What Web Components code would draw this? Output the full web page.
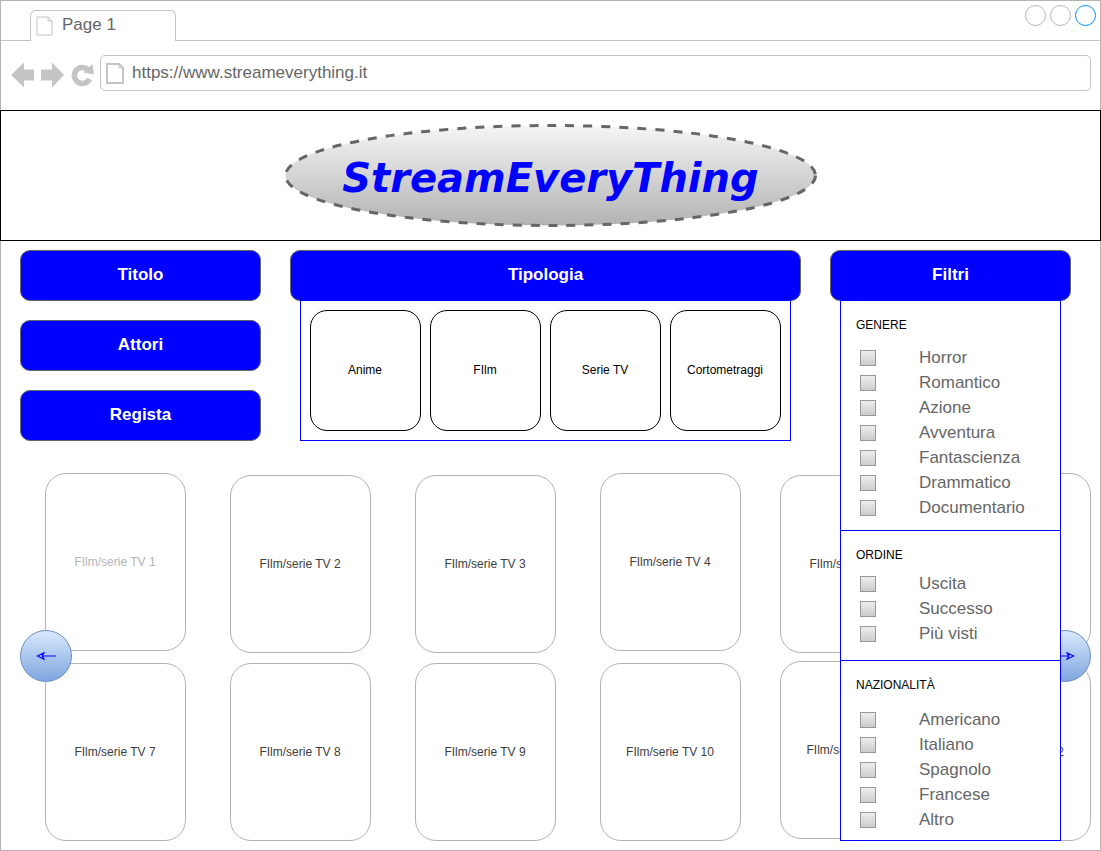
<!DOCTYPE html>
<html lang="it">
<head>
<meta charset="utf-8">
<meta name="viewport" content="width=device-width, initial-scale=1">
<title>StreamEveryThing</title>
<style>
  body { margin: 0; background: #fff; font-family: "Liberation Sans", Arial, sans-serif; }
</style>
</head>
<body>
<browser-frame tab="Page 1" address="https://www.streameverything.it">
  <site-banner>StreamEveryThing</site-banner>
  <search-bar>
    <div slot="search">
      <nav-button>Titolo</nav-button>
      <nav-button>Attori</nav-button>
      <nav-button>Regista</nav-button>
    </div>
    <drop-panel label="Tipologia" slot="types">
      <type-list>
        <type-tile>Anime</type-tile>
        <type-tile>FIlm</type-tile>
        <type-tile>Serie TV</type-tile>
        <type-tile>Cortometraggi</type-tile>
      </type-list>
    </drop-panel>
    <drop-panel label="Filtri" slot="filters" floating>
      <filter-group label="GENERE" options="Horror,Romantico,Azione,Avventura,Fantascienza,Drammatico,Documentario"></filter-group>
      <filter-group label="ORDINE" options="Uscita,Successo,Più visti" spacing="tight"></filter-group>
      <filter-group label="NAZIONALITÀ" options="Americano,Italiano,Spagnolo,Francese,Altro" spacing="wide"></filter-group>
    </drop-panel>
  </search-bar>
  <title-carousel>
    <title-card raised muted>FIlm/serie TV 1</title-card>
    <title-card>FIlm/serie TV 2</title-card>
    <title-card>FIlm/serie TV 3</title-card>
    <title-card raised>FIlm/serie TV 4</title-card>
    <title-card>FIlm/serie TV 5</title-card>
    <title-card raised>FIlm/serie TV 6</title-card>
    <title-card>FIlm/serie TV 7</title-card>
    <title-card>FIlm/serie TV 8</title-card>
    <title-card>FIlm/serie TV 9</title-card>
    <title-card>FIlm/serie TV 10</title-card>
    <title-card raised>FIlm/serie TV 11</title-card>
    <title-card>FIlm/serie TV 12</title-card>
  </title-carousel>
</browser-frame>

<script>
const base = '*, *::before { box-sizing: border-box; } button, input { font-family: inherit; margin: 0; }';

class Base extends HTMLElement {
  connectedCallback() {
    if (this.shadowRoot) return;
    const template = document.createElement('template');
    template.innerHTML = `<style>${base}${this.styles()}</style>${this.markup()}`;
    this.attachShadow({ mode: 'open' }).append(template.content.cloneNode(true));
  }
}

const page = (w, h, stroke) => `
  <svg width="${w}" height="${h}" viewBox="0 0 ${w} ${h}" fill="none" stroke="#c4c4c4" stroke-width="${stroke}" aria-hidden="true">
    <path d="M1 1H${w - 5}L${w - 1} 5V${h - 1}H1Z"/>
    <path d="M${w - 5} 1V5H${w - 1}" stroke-width="1"/>
  </svg>`;

customElements.define('browser-frame', class extends Base {
  styles() { return `
    :host { display: block; min-height: 100vh; box-sizing: border-box; border: 1px solid #b3b3b3; padding-bottom: 9px; }
    .strip { display: flex; justify-content: space-between; height: 40px; padding: 4px 4px 0 29px; border-bottom: 1px solid #c4c4c4; }
    .tab { display: flex; align-items: center; gap: 9px; align-self: flex-end; width: 146px; height: 31px; margin-bottom: -1px; padding: 0 0 0 5px;
      border: 1px solid #c4c4c4; border-bottom: 0; border-radius: 6px 6px 0 0; background: #fff; color: #666; font-size: 17px; line-height: 20px; }
    .tab span { padding-bottom: 3px; }
    .controls { display: flex; gap: 4px; }
    .controls button { width: 21px; height: 21px; padding: 0; border: 1px solid #b3b3b3; border-radius: 50%; background: #fff; }
    .controls button:last-child { border-color: #008cff; }
    .bar { display: flex; align-items: center; gap: 6px; height: 69px; padding: 0 9px 5px 10px; }
    .bar > button { display: block; flex: none; padding: 3px 0 0; border: 0; background: none; }
    svg { display: block; flex: none; }
    label { flex: 1; display: flex; align-items: center; gap: 8px; height: 36px; padding-left: 5px; border: 1px solid #c4c4c4; border-radius: 5px; }
    input { flex: 1; min-width: 0; padding: 0 0 1px; border: 0; outline: 0; background: none; color: #666; font-size: 17px; line-height: 20px; }
  `; }
  markup() { return `
    <div class="strip">
      <button class="tab" type="button">${page(17, 20, 1)}<span>${this.getAttribute('tab')}</span></button>
      <div class="controls">
        <button type="button" aria-label="Riduci"></button>
        <button type="button" aria-label="Ingrandisci"></button>
        <button type="button" aria-label="Chiudi"></button>
      </div>
    </div>
    <div class="bar">
      <button type="button" aria-label="Indietro"><svg width="24" height="26" viewBox="0 0 24 26" fill="#c4c4c4"><path d="M0 13L13 0.500V7.500H23V18.500H13V25.500Z"/></svg></button>
      <button type="button" aria-label="Avanti"><svg width="24" height="26" viewBox="0 0 24 26" fill="#c4c4c4"><path d="M23 13L11 0.500V7.500H0V18.500H11V25.500Z"/></svg></button>
      <button type="button" aria-label="Ricarica"><svg width="23" height="26" viewBox="0 0 23 26"><path d="M17 7.800A8 8 0 1 0 18.600 17" fill="none" stroke="#c4c4c4" stroke-width="5.500"/><path d="M21.500 2L23 12.500L12.500 10.500Z" fill="#c4c4c4"/></svg></button>
      <label>${page(18, 21, 2)}<input type="text" aria-label="Indirizzo" value="${this.getAttribute('address')}"></label>
    </div>
    <slot></slot>`; }
});

customElements.define('site-banner', class extends Base {
  styles() { return `
    :host { display: block; margin: 0 -1px; }
    header { display: grid; place-items: center; height: 131px; border: 1px solid #000; background: #fff; }
    header > * { grid-area: 1 / 1; }
    svg { display: block; }
    h1 { margin: 0; padding-top: 5px; color: #00f; font: italic bold 40px/48px "DejaVu Sans", Verdana, sans-serif; }
  `; }
  markup() { return `
    <header>
      <svg width="535" height="103" viewBox="0 0 535 103" aria-hidden="true">
        <defs><linearGradient id="g" x2="0" y2="1"><stop stop-color="#f5f5f5"/><stop offset="1" stop-color="#b3b3b3"/></linearGradient></defs>
        <ellipse cx="267.500" cy="51.500" rx="265" ry="50" fill="url(#g)" stroke="#666" stroke-width="3" stroke-dasharray="9 9"/>
      </svg>
      <h1><slot></slot></h1>
    </header>`; }
});

customElements.define('search-bar', class extends Base {
  styles() { return `
    :host { display: block; padding: 9px 29px 0 19px; }
    .columns { display: grid; grid-template-columns: 241fr 511fr 241fr; gap: 29px; align-items: start; }
    ::slotted(div) { display: grid; gap: 19px; }
  `; }
  markup() { return '<div class="columns"><slot name="search"></slot><slot name="types"></slot><slot name="filters"></slot></div>'; }
});

customElements.define('nav-button', class extends Base {
  styles() { return `
    :host { display: block; }
    button { display: block; width: 100%; height: 51px; padding: 0 0 1px; border: 1px solid #666; border-radius: 10px; background: #00f; color: #fff; font-size: 17px; font-weight: bold; line-height: 20px; }
  `; }
  markup() { return '<button type="button"><slot></slot></button>'; }
});

customElements.define('drop-panel', class extends Base {
  styles() { return `
    :host { display: block; position: relative; }
    .panel { margin: -1px 10px 0; border: 1px solid #00f; background: #fff; position: relative; }
    :host([floating]) { z-index: 2; }
    :host([floating]) .panel { position: absolute; left: 0; right: 0; top: 100%; }
  `; }
  markup() { return `<nav-button>${this.getAttribute('label')}</nav-button><div class="panel"><slot></slot></div>`; }
});

customElements.define('type-list', class extends Base {
  styles() { return ':host { display: grid; grid-template-columns: repeat(4, 1fr); gap: 9px; padding: 9px; }'; }
  markup() { return '<slot></slot>'; }
});

customElements.define('type-tile', class extends Base {
  styles() { return `
    :host { display: block; }
    button { display: block; width: 100%; height: 121px; padding: 0 1px 2px 0; border: 1px solid #000; border-radius: 17px; background: #fff; color: #000; font-size: 12px; line-height: 14px; }
  `; }
  markup() { return '<button type="button"><slot></slot></button>'; }
});

customElements.define('filter-group', class extends Base {
  styles() { return `
    :host { display: block; --space: 18px; --end: 14px; }
    :host([spacing="tight"]) { --space: 14px; --end: 18px; border-top: 1px solid #00f; }
    :host([spacing="wide"]) { --space: 20px; --end: 12px; border-top: 1px solid #00f; }
    fieldset { min-width: 0; margin: 0; padding: 17px 14px var(--end) 15px; border: 0; }
    legend { float: left; width: 100%; padding: 0; margin-bottom: var(--space); color: #000; font-size: 12px; line-height: 14px; }
    .options { clear: both; display: grid; gap: 9px; padding-left: 4px; }
    label { display: flex; align-items: center; gap: 43px; height: 16px; color: #666; font-size: 17px; line-height: 16px; }
    input { appearance: none; flex: none; width: 16px; height: 16px; border: 1px solid #999; background: linear-gradient(#eee, #ccc); }
  `; }
  markup() {
    const rows = this.getAttribute('options').split(',').map(o => `<label><input type="checkbox"><span>${o}</span></label>`).join('');
    return `<fieldset><legend>${this.getAttribute('label')}</legend><div class="options">${rows}</div></fieldset>`;
  }
});

customElements.define('title-carousel', class extends Base {
  styles() { return `
    :host { display: block; position: relative; margin: 32px 9px 0 44px; }
    .grid { display: grid; grid-template-columns: repeat(3, 185fr) 180fr 170fr 141fr; grid-auto-rows: 180px; row-gap: 8px; }
    button { position: absolute; z-index: 1; top: 157px; width: 52px; height: 52px; display: grid; place-items: center; padding: 0;
      border: 1px solid #6c8ebf; border-radius: 50%; background: linear-gradient(#dae8fc, #7ea6e0); }
    .prev { left: -25px; }
    .next { right: 0; }
    .next svg { transform: scaleX(-1); }
    svg { display: block; }
  `; }
  markup() {
    const arrow = '<svg width="20" height="8" viewBox="0 0 20 8" fill="none" stroke="#00f" stroke-width="1.200"><path d="M1.500 4L8 0.800L6.200 4L8 7.200Z M6.200 4H20"/></svg>';
    return `<div class="grid"><slot></slot></div>
      <button class="prev" type="button" aria-label="Precedenti">${arrow}</button>
      <button class="next" type="button" aria-label="Successivi">${arrow}</button>`;
  }
});

customElements.define('title-card', class extends Base {
  styles() { return `
    :host { display: block; align-self: end; width: 141px; color: #404040; }
    :host([raised]) { align-self: start; }
    :host([muted]) { color: #b3b3b3; }
    a { display: grid; place-items: center; height: 178px; padding-right: 1px; border: 1px solid #b3b3b3; border-radius: 21px; color: inherit; font-size: 12px; line-height: 14px; text-decoration: none; }
  `; }
  markup() { return '<a href="#"><span><slot></slot></span></a>'; }
});
</script>
</body>
</html>
